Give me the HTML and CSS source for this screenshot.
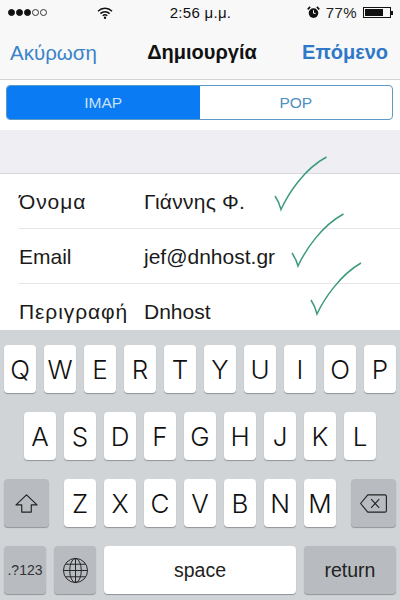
FILE: index.html
```html
<!DOCTYPE html>
<html lang="el">
<head>
<meta charset="utf-8">
<title>Δημιουργία</title>
<link rel="stylesheet" href="styles.css">
</head>
<body>
<div class="phone">
  <div class="status">
    <div class="status-left">
      <div class="dots"><i class="on"></i><i class="on"></i><i class="on"></i><i></i><i></i></div>
      <svg class="wifi" viewBox="0 0 16 12" width="16" height="12"><path d="M1 4.2a10 10 0 0 1 14 0M3.4 6.6a6.6 6.6 0 0 1 9.2 0M5.7 8.8a3.4 3.4 0 0 1 4.6 0" fill="none" stroke="#111" stroke-width="1.5"/><circle cx="8" cy="10.8" r="1.2" fill="#111"/></svg>
    </div>
    <div class="clock">2:56 μ.μ.</div>
    <div class="status-right">
      <svg class="alarm" viewBox="0 0 14 14" width="13" height="13"><circle cx="7" cy="7.6" r="5.2" fill="#111"/><path d="M7 4.5v3.4h2.4" fill="none" stroke="#fff" stroke-width="1"/><path d="M.8 3.6 3.4 1M13.2 3.6 10.6 1" stroke="#111" stroke-width="1.8"/></svg>
      <span class="pct">77%</span>
      <div class="battery"><div class="cell"><div class="charge"></div></div><div class="nub"></div></div>
    </div>
  </div>
  <div class="nav">
    <span class="nav-btn nav-cancel">Ακύρωση</span>
    <span class="nav-title">Δημιουργία</span>
    <span class="nav-btn nav-next">Επόμενο</span>
  </div>
  <div class="seg-wrap">
    <div class="seg">
      <div class="seg-item seg-active">IMAP</div>
      <div class="seg-item">POP</div>
    </div>
  </div>
  <div class="gap"></div>
  <div class="form">
    <div class="row"><span class="label label-greek">Όνομα</span><span class="value value-greek">Γιάννης Φ.</span></div>
    <div class="row"><span class="label">Email</span><span class="value">jef@dnhost.gr</span></div>
    <div class="row"><span class="label label-greek">Περιγραφή</span><span class="value">Dnhost</span></div>
    <svg class="check check-1" viewBox="0 0 54 56"><path d="M1 40 C3 43 5.500 47 7 53.500 C14 38 30 13 52.500 1" fill="none" stroke="#3d9a80" stroke-width="1.500"/></svg>
    <svg class="check check-2" viewBox="0 0 54 56"><path d="M1 40 C3 43 5.500 47 7 53 C14 38 30 13 52.500 1" fill="none" stroke="#3d9a80" stroke-width="1.500"/></svg>
    <svg class="check check-3" viewBox="0 0 54 56"><path d="M1 38 C3 41 5.500 46 7 52 C14 37 30 13 51 1" fill="none" stroke="#3d9a80" stroke-width="1.500"/></svg>
  </div>
  <div class="keyboard">
    <div class="kb-row">
      <div class="key">Q</div><div class="key">W</div><div class="key">E</div><div class="key">R</div><div class="key">T</div><div class="key">Y</div><div class="key">U</div><div class="key">I</div><div class="key">O</div><div class="key">P</div>
    </div>
    <div class="kb-row kb-center">
      <div class="key">A</div><div class="key">S</div><div class="key">D</div><div class="key">F</div><div class="key">G</div><div class="key">H</div><div class="key">J</div><div class="key">K</div><div class="key">L</div>
    </div>
    <div class="kb-row kb-between">
      <div class="key key-dark key-side"><svg viewBox="0 0 26 22" width="25" height="21"><path d="M13 2 24 12.500H18V20H8V12.500H2Z" fill="none" stroke="#222" stroke-width="1.200" stroke-linejoin="round"/></svg></div>
      <div class="kb-letters">
        <div class="key">Z</div><div class="key">X</div><div class="key">C</div><div class="key">V</div><div class="key">B</div><div class="key">N</div><div class="key">M</div>
      </div>
      <div class="key key-dark key-side"><svg viewBox="0 0 30 22" width="29" height="21"><path d="M9 2H27a1.500 1.500 0 0 1 1.500 1.500V18.500A1.500 1.500 0 0 1 27 20H9L1.500 11Z" fill="none" stroke="#222" stroke-width="1.200" stroke-linejoin="round"/><path d="M12.500 6.500l8.500 9M21 6.500l-8.500 9" stroke="#222" stroke-width="1.200"/></svg></div>
    </div>
    <div class="kb-row">
      <div class="key key-dark key-num">.?123</div>
      <div class="key key-dark key-globe"><svg viewBox="0 0 28 28" width="27" height="27"><g fill="none" stroke="#222" stroke-width="1"><circle cx="14" cy="14" r="12.500"/><ellipse cx="14" cy="14" rx="6" ry="12.500"/><path d="M14 1.500v25M1.500 14h25M3.500 7.500h21M3.500 20.500h21"/></g></svg></div>
      <div class="key key-space">space</div>
      <div class="key key-dark key-return">return</div>
    </div>
  </div>
</div>
</body>
</html>
```

FILE: styles.css
```css
* { box-sizing: border-box; }
html, body { margin: 0; padding: 0; }
body { width: 400px; height: 600px; overflow: hidden; font-family: "Liberation Sans", Arial, sans-serif; background: #fff; }
.phone { width: 400px; height: 600px; display: flex; flex-direction: column; }

.status { height: 25px; flex: none; display: grid; grid-template-columns: 1fr auto 1fr; align-items: center; background: #f8f8f8; color: #111; padding: 0 7px 0 8px; }
.status-left { display: flex; align-items: center; gap: 50px; }
.dots { display: flex; gap: 1px; }
.dots i { width: 7px; height: 7px; border-radius: 50%; border: 1px solid #333; }
.dots i.on { background: #111; border-color: #111; }
.clock { font-size: 15px; font-weight: 400; letter-spacing: 0.3px; }
.status-right { display: flex; align-items: center; justify-content: flex-end; gap: 6px; }
.pct { font-size: 15px; font-weight: 400; letter-spacing: 0.4px; color: #222; }
.battery { display: flex; align-items: center; }
.cell { width: 28px; height: 11px; border: 1px solid #111; padding: 1px; }
.charge { width: 77%; height: 100%; background: #111; }
.nub { width: 2px; height: 4px; background: #111; }

.nav { height: 55px; flex: none; display: flex; align-items: center; justify-content: space-between; padding: 1px 12px 0 10px; background: #f8f8f8; border-bottom: 1px solid #d4d4d4; }
.nav-btn { font-size: 20px; color: #3a83c9; }
.nav-cancel { font-size: 20.500px; }
.nav-next { font-weight: 700; color: #2f78c8; }
.nav-title { font-size: 20px; font-weight: 700; color: #111; margin-left: 5px; }

.seg-wrap { height: 50px; flex: none; padding: 5px 7px 0 6px; background: #fff; }
.seg { height: 35px; display: flex; border: 1px solid #5b9ac4; border-radius: 4px; overflow: hidden; }
.seg-item { flex: 1; display: flex; align-items: center; justify-content: center; font-size: 15.500px; color: #4d8fc0; }
.seg-active { background: #0a7bf2; color: #c9e2f5; }

.gap { height: 44px; flex: none; background: #efeff3; border-bottom: 1px solid #d8d8dc; }

.form { position: relative; height: 156px; flex: none; background: #fff; overflow: visible; }
.row { height: 55px; display: flex; align-items: center; padding-top: 2px; margin-left: 18px; border-bottom: 1px solid #e6e6e8; font-size: 21px; color: #1a1a1a; }
.row:last-of-type { border-bottom: 0; padding-top: 0; }
.label { width: 126px; flex: none; padding-left: 1px; }
.label-greek { letter-spacing: 0.900px; }
.value { font-size: 21px; }
.value-greek { letter-spacing: 0.250px; }
.check { position: absolute; width: 54px; height: 56px; z-index: 2; }
.check-1 { left: 274px; top: -18px; }
.check-2 { left: 291px; top: 39px; }
.check-3 { left: 310px; top: 88px; }

.keyboard { flex: 1; background: #d1d4d7; padding: 15px 4px 0; display: flex; flex-direction: column; gap: 19px; }
.kb-row { display: flex; gap: 8px; height: 48px; }
.kb-center { justify-content: center; }
.kb-between { justify-content: space-between; }
.kb-letters { display: flex; gap: 8px; }
.key { width: 32px; height: 48px; flex: none; display: flex; align-items: center; justify-content: center; background: #fff; border-radius: 4px; box-shadow: 0 1px 1px #8f9397; font-family: Inter, "Liberation Sans", sans-serif; font-weight: 300; font-size: 26px; color: #111; }
.key-dark { background: #b8bcc1; }
.key-side { width: 45px; }
.key-num { width: 42px; font-family: "Liberation Sans", sans-serif; font-weight: 400; font-size: 14px; color: #333; }
.key-globe { width: 42px; }
.key-space { width: 192px; font-family: "Liberation Sans", sans-serif; font-weight: 400; font-size: 19.500px; color: #222; }
.key-return { width: 92px; font-family: "Liberation Sans", sans-serif; font-weight: 400; font-size: 19.500px; color: #222; }
```
